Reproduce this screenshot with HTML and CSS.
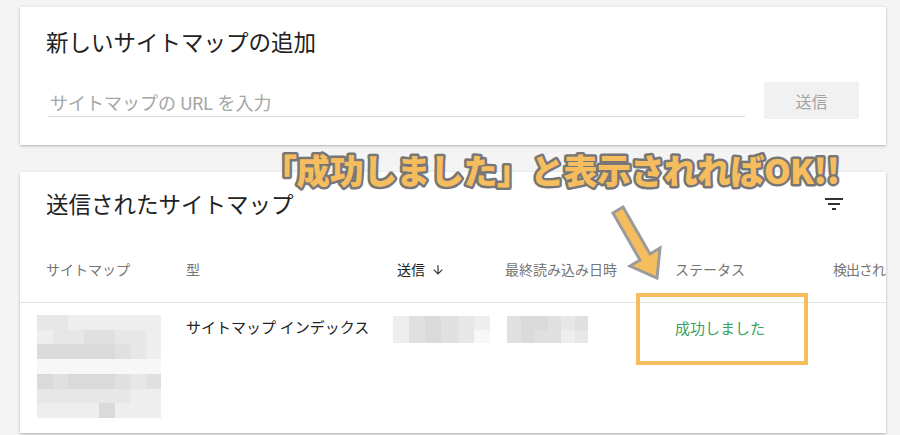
FILE: index.html
```html
<!DOCTYPE html>
<html lang="ja">
<head>
<meta charset="utf-8">
<link rel="stylesheet" href="styles.css">
</head>
<body>
<div class="page">
  <section class="card add-card">
    <h2 class="card-title">新しいサイトマップの追加</h2>
    <div class="add-row">
      <div class="field"><span class="placeholder">サイトマップの URL を入力</span></div>
      <button class="send-btn">送信</button>
    </div>
  </section>

  <section class="card list-card">
    <div class="title-row">
      <h2 class="card-title">送信されたサイトマップ</h2>
      <svg class="filter-icon" viewBox="0 0 24 24" width="24" height="24"><path d="M10 18h4v-2h-4v2zM3 6v2h18V6H3zm3 7h12v-2H6v2z" fill="#333"/></svg>
    </div>
    <div class="table-head cols">
      <div>サイトマップ</div>
      <div>型</div>
      <div class="sorted">送信 <svg class="sort-arrow" viewBox="0 0 24 24" width="14" height="14"><path d="M20 12l-1.41-1.41L13 16.17V4h-2v12.17l-5.58-5.59L4 12l8 8 8-8z" fill="#333"/></svg></div>
      <div>最終読み込み日時</div>
      <div>ステータス</div>
      <div class="last-col">検出され</div>
    </div>
    <div class="table-row cols">
      <div>
        <div class="pix pix-big">
          <i class="c"></i><i class="c"></i><i class="d"></i><i class="d"></i><i class="d"></i><i class="d"></i><i class="d"></i><i class="d"></i>
          <i class="d"></i><i class="c"></i><i class="c"></i><i class="b"></i><i class="b"></i><i class="c"></i><i class="c"></i><i class="d"></i>
          <i class="a"></i><i class="a"></i><i class="a"></i><i class="a"></i><i class="a"></i><i class="b"></i><i class="c"></i><i class="d"></i>
          <i class="e"></i><i class="e"></i><i class="e"></i><i class="e"></i><i class="e"></i><i class="e"></i><i class="e"></i><i class="e"></i>
          <i class="a"></i><i class="b"></i><i class="a"></i><i class="a"></i><i class="a"></i><i class="b"></i><i class="c"></i><i class="b"></i>
          <i class="c"></i><i class="c"></i><i class="c"></i><i class="c"></i><i class="c"></i><i class="c"></i><i class="d"></i><i class="d"></i>
          <i class="d"></i><i class="d"></i><i class="d"></i><i class="d"></i><i class="a"></i><i class="d"></i><i class="d"></i><i class="d"></i>
        </div>
      </div>
      <div class="type-cell">サイトマップ インデックス</div>
      <div>
        <div class="pix pix-sent">
          <i class="d"></i><i class="b"></i><i class="a"></i><i class="b"></i><i class="c"></i><i class="d"></i>
          <i class="d"></i><i class="b"></i><i class="a"></i><i class="b"></i><i class="c"></i><i class="e"></i>
        </div>
      </div>
      <div>
        <div class="pix pix-read">
          <i class="b"></i><i class="a"></i><i class="a"></i><i class="b"></i><i class="c"></i><i class="b"></i>
          <i class="b"></i><i class="a"></i><i class="b"></i><i class="b"></i><i class="d"></i><i class="c"></i>
        </div>
      </div>
      <div class="status-ok">成功しました</div>
      <div></div>
    </div>
  </section>
</div>

<div class="highlight-box"></div>
<svg class="annotation" width="610" height="60" viewBox="0 0 610 60">
  <text x="8" y="39" textLength="577" lengthAdjust="spacing" class="annotation-text">「成功しました」と表示されればOK!!</text>
</svg>
<svg class="pointer" width="900" height="435" viewBox="0 0 900 435">
  <polygon points="623,207 650,254 660,248 657,278 630,266 640,260 613,213" fill="#f6bd5f" stroke="#9b9b9b" stroke-width="3" stroke-linejoin="miter"/>
</svg>
</body>
</html>
```

FILE: styles.css
```css
* { box-sizing: border-box; }
html, body {
  margin: 0;
  padding: 0;
  background: #f4f4f4;
  width: 900px;
  height: 435px;
  overflow: hidden;
  font-family: Roboto, "Noto Sans CJK JP", sans-serif;
  color: #212121;
}
.page {
  padding: 7px 14px 0 20px;
  display: flex;
  flex-direction: column;
  gap: 27px;
}
.card {
  background: #fff;
  width: 866px;
  box-shadow: 0 1px 3px rgba(0,0,0,0.22), 0 1px 1px rgba(0,0,0,0.06);
}
.card-title {
  margin: 0;
  font-size: 22.5px;
  line-height: 28px;
  font-weight: 400;
  color: #222;
}
.add-card {
  padding: 22px 27px 26px 26px;
}
.add-row {
  display: flex;
  align-items: flex-end;
  gap: 19px;
  margin-top: 25px;
}
.field {
  flex: 1;
  margin-left: 2px;
  margin-bottom: 2px;
  border-bottom: 1px solid #dcdcdc;
  height: 25px;
}
.placeholder {
  display: block;
  font-size: 18px;
  line-height: 24px;
  color: #a6a6a6;
  padding-left: 2px;
}
.send-btn {
  width: 95px;
  height: 37px;
  border: none;
  background: #f1f1f1;
  color: #a3a3a3;
  font-family: inherit;
  font-size: 16px;
  padding: 0;
}
.list-card {
  padding-top: 19px;
  height: 261px;
}
.title-row {
  display: flex;
  justify-content: space-between;
  align-items: flex-start;
  padding: 0 40px 0 26px;
}
.filter-icon {
  margin-top: 1px;
}
.cols {
  display: grid;
  grid-template-columns: 140px 211px 108px 170px 158px 1fr;
  padding-left: 26px;
}
.table-head {
  padding-top: 40px;
  padding-bottom: 21px;
  border-bottom: 1px solid #e3e3e3;
  font-size: 14px;
  line-height: 22px;
  color: #757575;
  white-space: nowrap;
}
.table-head .last-col {
  letter-spacing: -1px;
}
.table-head .sorted {
  color: #222;
  display: flex;
  align-items: center;
  gap: 6px;
}
.table-row {
  padding-top: 12px;
  padding-bottom: 14px;
}
.type-cell {
  font-size: 15px;
  line-height: 24px;
  color: #222;
  padding-top: 1px;
}
.status-ok {
  font-size: 15px;
  line-height: 24px;
  color: #3a9f5f;
  padding-top: 2px;
}
.pix {
  display: grid;
}
.pix i { display: block; }
.pix-big {
  margin-left: -9px;
  width: 124px;
  height: 103px;
  grid-template-columns: repeat(8, 1fr);
  grid-template-rows: repeat(7, 1fr);
}
.pix-sent {
  margin-left: -4px;
  margin-top: 1px;
  width: 97px;
  height: 27px;
  grid-template-columns: repeat(6, 1fr);
  grid-template-rows: repeat(2, 1fr);
}
.pix-read {
  margin-left: 2px;
  margin-top: 1px;
  width: 81px;
  height: 27px;
  grid-template-columns: repeat(6, 1fr);
  grid-template-rows: repeat(2, 1fr);
}
.pix .a { background: #dadada; }
.pix .b { background: #e0e0e0; }
.pix .c { background: #e7e7e7; }
.pix .d { background: #eeeeee; }
.pix .e { background: #f7f7f7; }

.highlight-box {
  position: absolute;
  left: 636px;
  top: 293px;
  width: 172px;
  height: 72px;
  border: 4px solid #f6bd5f;
}
.annotation {
  position: absolute;
  left: 255px;
  top: 145px;
}
.annotation-text {
  font-family: "Noto Sans CJK JP", sans-serif;
  font-weight: 900;
  font-size: 34px;
  fill: #f6bd5f;
  stroke: #777;
  stroke-width: 5px;
  stroke-linejoin: round;
  paint-order: stroke fill;
}
.pointer {
  position: absolute;
  left: 0;
  top: 0;
  pointer-events: none;
}
```
